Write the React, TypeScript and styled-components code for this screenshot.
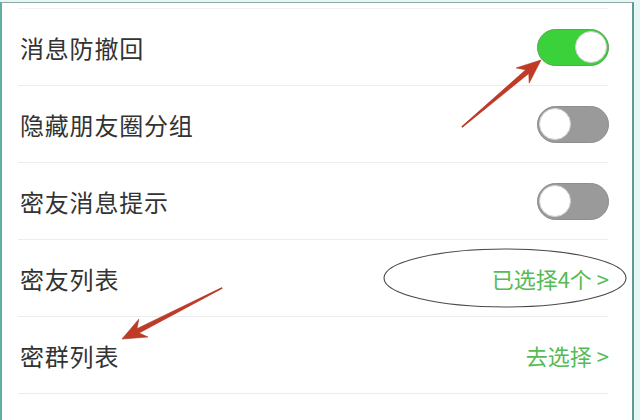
import React from 'react';
import styled, { createGlobalStyle } from 'styled-components';

const GlobalStyle = createGlobalStyle`
  html, body {
    margin: 0;
    padding: 0;
    background: #e6f6f5;
    overflow: hidden;
  }
  body {
    font-family: "Noto Sans CJK SC", "Noto Sans", sans-serif;
  }
`;

const Frame = styled.div`
  position: relative;
  box-sizing: border-box;
  width: 634px;
  height: 418px;
  margin-top: 2px;
  background: #ffffff;
  border-top: 1px solid #8fa7a5;
  border-left: 2px solid #5fae9f;
  border-right: 2px solid #5f9894;
  overflow: hidden;
  padding-top: 5px;
`;

const List = styled.div`
  margin-left: 16px;
  width: 590px;
  border-top: 1px solid #f2f2f2;
`;

const Row = styled.div`
  display: flex;
  align-items: center;
  justify-content: space-between;
  height: 76px;
  padding-left: 2px;
  border-bottom: 1px solid #ececec;
`;

const Label = styled.span`
  font-size: 24px;
  color: #333333;
  letter-spacing: 0.8px;
`;

const Track = styled.div<{ $on: boolean }>`
  position: relative;
  box-sizing: border-box;
  width: 72px;
  height: 37px;
  margin-right: -1px;
  border-radius: 19px;
  background: ${({ $on }) => ($on ? '#3ad13a' : '#9a9a9a')};
  border: 1.5px solid ${({ $on }) => ($on ? '#5aa55a' : '#8e8e8e')};
`;

const Knob = styled.div<{ $on: boolean }>`
  position: absolute;
  top: 1px;
  ${({ $on }) => ($on ? 'right: 1px;' : 'left: 1px;')}
  box-sizing: border-box;
  width: 32px;
  height: 32px;
  border-radius: 50%;
  background: #ffffff;
  border: 1px solid #d0d0d0;
`;

const Value = styled.span`
  font-size: 22px;
  color: #55bb55;
  margin-right: -1px;
`;

const Overlay = styled.svg`
  position: absolute;
  left: -2px;
  top: -3px;
  pointer-events: none;
`;

const Toggle = ({ on }: { on: boolean }) => (
  <Track $on={on}>
    <Knob $on={on} />
  </Track>
);

// tapered arrow drawn from tail (x1,y1) to tip (x2,y2)
const Arrow = ({ x1, y1, x2, y2 }: { x1: number; y1: number; x2: number; y2: number }) => {
  const dx = x2 - x1;
  const dy = y2 - y1;
  const len = Math.hypot(dx, dy);
  const ux = dx / len;
  const uy = dy / len;
  const nx = -uy;
  const ny = ux;
  const headLen = 24;
  const headW = 10;
  const bx = x2 - ux * headLen;
  const by = y2 - uy * headLen;
  const nbx = bx + ux * 6;
  const nby = by + uy * 6;
  const pts = [
    [x1 + nx * 0.5, y1 + ny * 0.5],
    [nbx + nx * 2.4, nby + ny * 2.4],
    [bx + nx * headW, by + ny * headW],
    [x2, y2],
    [bx - nx * headW, by - ny * headW],
    [nbx - nx * 2.4, nby - ny * 2.4],
    [x1 - nx * 0.5, y1 - ny * 0.5],
  ]
    .map((p) => p.map((v) => v.toFixed(1)).join(','))
    .join(' ');
  return <polygon points={pts} fill="#c13a26" stroke="#a8321f" strokeWidth={0.6} strokeLinejoin="round" />;
};

const rows = [
  { label: '消息防撤回', toggle: true },
  { label: '隐藏朋友圈分组', toggle: false },
  { label: '密友消息提示', toggle: false },
  { label: '密友列表', value: '已选择4个 >' },
  { label: '密群列表', value: '去选择 >' },
  { label: '聊天记录备份', value: '去设置 >' },
];

export default function App() {
  return (
    <>
      <GlobalStyle />
      <Frame>
        <List>
          {rows.map((r) => (
            <Row key={r.label}>
              <Label>{r.label}</Label>
              {r.value !== undefined ? <Value>{r.value}</Value> : <Toggle on={!!r.toggle} />}
            </Row>
          ))}
        </List>
        <Overlay width={640} height={420} viewBox="0 0 640 420">
          <ellipse cx={505} cy={278} rx={121} ry={29} fill="none" stroke="#4a4a4a" strokeWidth={1.1} />
          <Arrow x1={462} y1={127} x2={541} y2={60} />
          <Arrow x1={222} y1={288} x2={122} y2={339} />
        </Overlay>
      </Frame>
    </>
  );
}
